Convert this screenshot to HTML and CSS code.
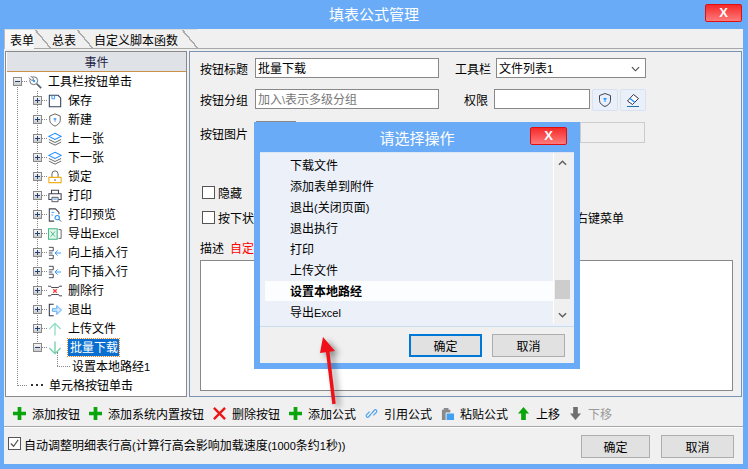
FILE: index.html
```html
<!DOCTYPE html>
<html lang="zh-CN">
<head>
<meta charset="UTF-8">
<title>填表公式管理</title>
<link rel="stylesheet" href="styles.css">
</head>
<body>
<div class="win">
  <div class="titlebar">
    <span class="title">填表公式管理</span>
    <span class="close-btn">X</span>
  </div>
  <div class="client">
    <div class="tabs">
      <span class="tab on">表单</span>
      <span class="tab">总表</span>
      <span class="tab">自定义脚本函数</span>
    </div>
    <div class="main">
      <div class="left">
        <div class="left-head">事件</div>
        <ul class="tree">
          <li>
            <div class="node"><i class="exp minus"></i><svg class="ico" viewBox="0 0 16 16"><circle cx="6.500" cy="6.500" r="4.500" fill="#fff" stroke="#55606e"/><path d="M3 1l3 3v2h-2l-3-3" fill="#fff" stroke="#55606e"/><circle cx="7" cy="7" r="1.300" fill="#1e90ff"/><path d="M10 10l5 5" stroke="#55606e" stroke-width="2"/></svg><span class="txt">工具栏按钮单击</span></div>
            <ul class="sub">
              <li><div class="node"><i class="exp"></i><svg class="ico" viewBox="0 0 16 16"><path d="M1.500 1.500h10l3 3v10h-13z" fill="none" stroke="#33405a" stroke-width="1.200"/><path d="M4.500 2v3.500h3V2" fill="none" stroke="#1e90ff"/></svg><span class="txt">保存</span></div></li>
              <li><div class="node"><i class="exp"></i><svg class="ico" viewBox="0 0 16 16"><path d="M8 1l6 2.500v5c0 3-3.500 5.500-6 6.500-2.500-1-6-3.500-6-6.500v-5z" fill="none" stroke="#555"/><path d="M6.500 6h3v1.500h-3z" fill="#1e90ff"/><path d="M8 7v3" stroke="#1e90ff"/></svg><span class="txt">新建</span></div></li>
              <li><div class="node"><i class="exp"></i><svg class="ico" viewBox="0 0 16 16"><path d="M8 1.500l7 3.500-7 3.500L1 5z" fill="none" stroke="#1e90ff" stroke-width="1.200"/><path d="M1 8.500l7 3.500 7-3.500M1 11.500L8 15l7-3.500" fill="none" stroke="#555"/></svg><span class="txt">上一张</span></div></li>
              <li><div class="node"><i class="exp"></i><svg class="ico" viewBox="0 0 16 16"><path d="M8 1.500l7 3.500-7 3.500L1 5z" fill="none" stroke="#1e90ff" stroke-width="1.200"/><path d="M1 8.500l7 3.500 7-3.500M1 11.500L8 15l7-3.500" fill="none" stroke="#555"/></svg><span class="txt">下一张</span></div></li>
              <li><div class="node"><i class="exp"></i><svg class="ico" viewBox="0 0 16 16"><path d="M4.500 8V4.500a3.500 3.500 0 0 1 7 0V8" fill="none" stroke="#555"/><path d="M1 8.500h14v6H1z" fill="none" stroke="#f0b020" stroke-width="1.300"/><path d="M7 11.500h2" stroke="#333"/></svg><span class="txt">锁定</span></div></li>
              <li><div class="node"><i class="exp"></i><svg class="ico" viewBox="0 0 16 16"><path d="M4 5V1.500h8V5M4 12H1V5.500h14V12h-3" fill="none" stroke="#445" stroke-width="1.200"/><path d="M4.500 9.500h7v5h-7z" fill="none" stroke="#445"/><path d="M6 11.500h4" stroke="#1e90ff"/></svg><span class="txt">打印</span></div></li>
              <li><div class="node"><i class="exp"></i><svg class="ico" viewBox="0 0 16 16"><path d="M7 15H1.500V1h7l4 4v2" fill="none" stroke="#445" stroke-width="1.200"/><path d="M4 5h3M4 8h2" stroke="#1e90ff"/><circle cx="10.500" cy="11" r="2.500" fill="none" stroke="#1e90ff" stroke-width="1.200"/><path d="M12.500 13l2.500 2.500" stroke="#445"/></svg><span class="txt">打印预览</span></div></li>
              <li><div class="node"><i class="exp"></i><svg class="ico" viewBox="0 0 16 16"><path d="M.500 2h10v12H.500z" fill="#e4f5ec" stroke="#3cb882" stroke-width="1.200"/><path d="M3 5l5 6M8 5l-5 6" stroke="#3cb882"/><path d="M12 3h3v10h-3" fill="none" stroke="#555"/></svg><span class="txt">导出<span class="latin">Excel</span></span></div></li>
              <li><div class="node"><i class="exp"></i><svg class="ico" viewBox="0 0 16 16"><path d="M1 1.500h5v4H1M1 8h4M1 10.500h5v4H1" fill="none" stroke="#334"/><path d="M15 8H8M11 5L8 8l3 3" fill="none" stroke="#1e90ff"/></svg><span class="txt">向上插入行</span></div></li>
              <li><div class="node"><i class="exp"></i><svg class="ico" viewBox="0 0 16 16"><path d="M1 1.500h5v4H1M1 8h4M1 10.500h5v4H1" fill="none" stroke="#334"/><path d="M15 8H8M11 5L8 8l3 3" fill="none" stroke="#1e90ff"/></svg><span class="txt">向下插入行</span></div></li>
              <li><div class="node"><i class="exp"></i><svg class="ico" viewBox="0 0 16 16"><path d="M0 2.500h3l1 1.500h8l1-1.500h3M0 13.500h3l1-1.500h8l1 1.500h3" fill="none" stroke="#334"/><path d="M6 6l4 4M10 6l-4 4" stroke="#f04040" stroke-width="1.500"/></svg><span class="txt">删除行</span></div></li>
              <li><div class="node"><i class="exp"></i><svg class="ico" viewBox="0 0 16 16"><path d="M6.500 1.500h-5v13h5" fill="none" stroke="#334" stroke-width="1.200"/><path d="M5 6.500h5V3l5.500 5-5.500 5V9.500H5z" fill="#cfe7ff" stroke="#49a2f5"/></svg><span class="txt">退出</span></div></li>
              <li><div class="node"><i class="exp"></i><svg class="ico" viewBox="0 0 16 16"><path d="M8 15.500V2M1.500 8L8 1.500 14.500 8" fill="none" stroke="#8fdcc0" stroke-width="1.500"/></svg><span class="txt">上传文件</span></div></li>
              <li>
                <div class="node"><i class="exp minus"></i><svg class="ico" viewBox="0 0 16 16"><path d="M8 .500V14M1.500 8L8 14.500 14.500 8" fill="none" stroke="#6fd0a8" stroke-width="1.500"/></svg><span class="txt sel">批量下载</span></div>
                <ul class="sub2">
                  <li><div class="node"><span class="txt">设置本地路经<span class="latin">1</span></span></div></li>
                </ul>
              </li>
            </ul>
          </li>
          <li><div class="node leaf"><b class="dots"></b><span class="txt">单元格按钮单击</span></div></li>
        </ul>
      </div>
      <div class="right">
        <div class="frow">
          <label class="lab">按钮标题</label>
          <div class="inp wide">批量下载</div>
          <label class="lab lab2">工具栏</label>
          <div class="inp sel-box">文件列表<span class="latin">1</span><svg class="chev" viewBox="0 0 10 6"><path d="M1 1l4 4 4-4" fill="none" stroke="#444" stroke-width="1.200"/></svg></div>
        </div>
        <div class="frow">
          <label class="lab">按钮分组</label>
          <div class="inp wide hint">加入<span class="latin">\</span>表示多级分组</div>
          <label class="lab lab3">权限</label>
          <div class="inp perm"></div>
          <span class="sq"><svg viewBox="0 0 16 16"><path d="M8 1.500l5.500 2v5c0 3-3 5-5.500 6-2.500-1-5.500-3-5.500-6v-5z" fill="none" stroke="#445"/><path d="M6.500 6h3v1.500h-3z" fill="#1e90ff"/><path d="M8 7v3" stroke="#1e90ff"/></svg></span>
          <span class="sq"><svg viewBox="0 0 16 16"><path d="M2.500 9l6-6.500 5 4-6 6z" fill="#fff" stroke="#334"/><path d="M5 6.500l5 4" stroke="#1e90ff" stroke-width="1.500"/><path d="M2 14.500h12" stroke="#1e6fb0"/></svg></span>
        </div>
        <div class="frow img-row">
          <label class="lab">按钮图片</label>
          <div class="img-box"></div>
          <div class="img-path"></div>
        </div>
        <div class="chk-row"><i class="chk"></i>隐藏</div>
        <div class="chk-row next"><i class="chk"></i>按下状态<span class="ctx">右键菜单</span></div>
        <div class="desc-row">描述<span class="red">自定义按钮</span></div>
        <div class="desc"></div>
      </div>
    </div>
    <div class="toolbar">
      <span class="tool"><svg viewBox="0 0 14 14"><path d="M5 0h4v5h5v4H9v5H5V9H0V5h5z" fill="#0aa50a"/></svg>添加按钮</span>
      <span class="tool"><svg viewBox="0 0 14 14"><path d="M5 0h4v5h5v4H9v5H5V9H0V5h5z" fill="#0aa50a"/></svg>添加系统内置按钮</span>
      <span class="tool"><svg viewBox="0 0 14 14"><path d="M1 1l12 12M13 1L1 13" stroke="#e81818" stroke-width="2.600"/></svg>删除按钮</span>
      <span class="tool"><svg viewBox="0 0 14 14"><path d="M5 0h4v5h5v4H9v5H5V9H0V5h5z" fill="#0aa50a"/></svg>添加公式</span>
      <span class="tool"><svg viewBox="0 0 14 14"><path d="M6 8.500L3.500 11a1.700 1.700 0 0 1-2-2.500L5 5M8 5.500L10.500 3a1.700 1.700 0 0 1 2 2.500L9 9M4.500 9.500l5-5" fill="none" stroke="#4fa3ee" stroke-width="1.300"/></svg>引用公式</span>
      <span class="tool"><svg viewBox="0 0 14 14"><path d="M1 14V3h2V1h5v2h2v3H5v8z" fill="#8a8a8a"/><path d="M6 7h8v7H6z" fill="#42a0f0"/></svg>粘贴公式</span>
      <span class="tool"><svg viewBox="0 0 14 14"><path d="M7 0l6 7H9.500v7h-5V7H1z" fill="#0aa50a"/></svg>上移</span>
      <span class="tool off"><svg viewBox="0 0 14 14"><path d="M7 14l6-7H9.500V0h-5v7H1z" fill="#6e6e6e"/></svg>下移</span>
    </div>
    <div class="footer">
      <i class="chk checked"><svg viewBox="0 0 12 12"><path d="M2 6l3 3 5-7" fill="none" stroke="#555" stroke-width="1.300"/></svg></i>
      <span class="foot-txt">自动调整明细表行高<span class="latin">(</span>计算行高会影响加载速度<span class="latin">(1000</span>条约<span class="latin">1</span>秒<span class="latin">))</span></span>
      <span class="btn">确定</span>
      <span class="btn">取消</span>
    </div>
  </div>
</div>

<div class="dlg">
  <div class="dlg-title"><span class="title">请选择操作</span><span class="close-btn">X</span></div>
  <div class="dlg-body">
    <div class="dlg-list">
      <ul class="ops">
        <li>下载文件</li>
        <li>添加表单到附件</li>
        <li>退出<span class="latin">(</span>关闭页面<span class="latin">)</span></li>
        <li>退出执行</li>
        <li>打印</li>
        <li>上传文件</li>
        <li class="cur">设置本地路经</li>
        <li>导出<span class="latin">Excel</span></li>
      </ul>
      <div class="scroll">
        <svg viewBox="0 0 10 6"><path d="M1 5l4-4 4 4" fill="none" stroke="#606060" stroke-width="1.600"/></svg>
        <span class="thumb"></span>
        <svg viewBox="0 0 10 6"><path d="M1 1l4 4 4-4" fill="none" stroke="#606060" stroke-width="1.600"/></svg>
      </div>
    </div>
    <div class="dlg-foot">
      <span class="btn main-btn">确定</span>
      <span class="btn">取消</span>
    </div>
  </div>
</div>

<svg class="arrow" viewBox="0 0 30 80"><path d="M11.500 20L18 74" stroke="#f01018" stroke-width="3.500"/><path d="M7 7L19 21 4 23z" fill="#f01018"/></svg>
</body>
</html>
```
FILE: styles.css
```css
*{ padding:0; margin:0; box-sizing:border-box; }
ul{ list-style:none; }
i{ font-style:normal; display:block; }
html,body{ width:748px; height:469px; overflow:hidden; }
body{
  position:relative;
  font-family:"Noto Sans CJK SC","Liberation Sans",sans-serif;
  font-size:12px;
  color:#000;
  background:#6aabf7;
}
.latin{ font-family:"Liberation Sans",sans-serif; font-size:11px; }

.win{ display:flex; flex-direction:column; height:464px; }
.titlebar{ height:29px; display:flex; justify-content:center; align-items:center; position:relative; flex:none; padding-bottom:2px; }
.title{ color:#fff; font-size:15px; }
.close-btn{
  position:absolute;
  right:6px;
  top:4px;
  width:37px;
  height:18px;
  background:linear-gradient(#f52a2a,#ff7a7a);
  border:1px solid #e01010;
  border-radius:2px;
  color:#fff;
  font:bold 13px/16px "Liberation Sans",sans-serif;
  text-align:center;
}
.client{ margin:0 5px 0 4px; flex:1; background:#f0f0f0; display:flex; flex-direction:column; min-height:0; }

.tabs{ height:20px; display:flex; border-bottom:1px solid #a8a8a8; flex:none; }
.tab{
  position:relative;
  height:20px;
  line-height:20px;
  padding:0 16px 0 5px;
  margin-right:-3px;
  border-top:1px solid #ddd;
}
.tab:last-child{ padding-right:19px; }
.tab::after{
  content:"";
  position:absolute;
  right:-1px;
  top:0;
  width:16px;
  height:19px;
  background:linear-gradient(to top right,transparent 48%,#aaa 48%,#aaa 54%,transparent 54%);
}
.tab.on{ background:linear-gradient(#f8f8f8,#f8f8f8) 0 0/calc(100% - 16px) 100% no-repeat; border-left:1px solid #bbb; }

.main{ height:348px; display:flex; flex:none; padding:2px 1px 0 1px; gap:2px; }
.left{ width:182px; flex:none; border:1px solid #8a8a8a; background:#fff; padding-left:1px; overflow:hidden; }
.left-head{ height:20px; line-height:19px; background:#dfe3e8; border-bottom:1px solid #c8924a; text-align:center; color:#224; }

.tree{ position:relative; padding-left:6px; }
.tree::before{ content:""; position:absolute; left:10px; top:10px; bottom:9px; border-left:1px dotted #888; }
.sub{ position:relative; padding-left:20px; }
.sub::before{ content:""; position:absolute; left:24px; top:0; bottom:28px; border-left:1px dotted #888; }
.sub2{ position:relative; padding-left:24px; }
.sub2::before{ content:""; position:absolute; left:24px; top:-5px; height:14px; border-left:1px dotted #888; }
.node{
  height:19px;
  display:flex;
  align-items:center;
  position:relative;
  background:repeating-linear-gradient(90deg,#888 0 1px,transparent 1px 2px) 9px 9px/6px 1px no-repeat;
}
.exp{
  width:9px;
  height:9px;
  border:1px solid #8a8a8a;
  background:linear-gradient(#f6f6f6,#ccc);
  position:relative;
  flex:none;
  z-index:1;
  margin-right:6px;
}
.exp::before{ content:""; position:absolute; left:1px; top:3px; width:5px; height:1px; background:#24407a; }
.exp::after{ content:""; position:absolute; left:3px; top:1px; width:1px; height:5px; background:#24407a; }
.exp.minus::after{ display:none; }
.ico{ width:14px; height:14px; flex:none; margin-right:5px; }
.txt{ white-space:nowrap; padding:0 1px 2px; }
.sel{ background:#0a6fd0; color:#fff; outline:1px dotted #f08020; line-height:15px; margin-left:1px; padding:0 1px 2px 2px; }
.sub2 .node{ background:none; }
.sub2 .node::before{ content:""; width:13px; border-top:1px dotted #888; margin-right:1px; }
.leaf{ background:none; }
.leaf .dots{ width:10px; height:1px; margin:0 20px 0 5px; background:repeating-linear-gradient(90deg,#888 0 1px,transparent 1px 2px); position:relative; }
.leaf .dots::after{ content:""; position:absolute; left:13px; top:-1px; width:12px; height:2px; background:repeating-linear-gradient(90deg,#333 0 2px,transparent 2px 5px); }

.right{ flex:1; min-width:0; border:1px solid #7a93b5; padding:6px 9px 0 10px; display:flex; flex-direction:column; }
.frow{ display:flex; align-items:center; height:20px; margin-bottom:11px; }
.lab{ width:55px; flex:none; }
.lab2{ width:41px; margin-left:16px; }
.lab3{ width:30px; margin-left:25px; }
.inp{ height:20px; border:1px solid #888; background:#fff; line-height:18px; padding-left:2px; position:relative; flex:none; }
.wide{ width:184px; }
.hint{ color:#777; }
.sel-box{ width:150px; }
.chev{ position:absolute; right:5px; top:7px; width:9px; height:6px; }
.perm{ width:96px; margin-right:2px; }
.sq{ width:26px; height:22px; flex:none; align-self:flex-start; border:1px solid #d8e2f2; border-radius:2px; background:#eaf0fa; margin-right:2px; display:flex; align-items:center; justify-content:center; }
.sq svg{ width:16px; height:16px; }
.img-row{ align-items:flex-start; height:66px; margin-bottom:0; line-height:28px; }
.img-box{ width:40px; height:40px; border-top:1px solid #888; margin:1px 284px 0 1px; flex:none; }
.img-path{ width:65px; height:21px; border:1px solid #ccc; margin-top:2px; flex:none; }
.chk{ width:13px; height:13px; border:1px solid #555; background:#fff; margin:0 3px 0 2px; flex:none; }
.chk-row{ display:flex; align-items:center; height:13px; }
.next{ margin-top:12px; }
.ctx{ margin-left:310px; }
.desc-row{ margin-top:15px; height:18px; line-height:18px; }
.red{ color:#f00; margin-left:6px; }
.desc{ height:131px; width:533px; margin-top:3px; background:#fff; border:1px solid #888; }

.toolbar{ height:30px; display:flex; align-items:center; gap:9px; padding:3px 0 0 9px; flex:none; border-bottom:1px solid #a8a8a8; }
.tool{ display:flex; align-items:center; white-space:nowrap; }
.tool svg{ width:13px; height:13px; margin-right:6px; }
.off{ color:#999; }
.footer{ flex:1; display:flex; align-items:center; padding:0 9px 0 4px; border-top:1px solid #fff; }
.chk.checked{ margin:-5px 3px 0 0; display:flex; }
.chk.checked svg{ width:11px; height:11px; }
.foot-txt{ flex:1; padding-bottom:4px; }
.btn{
  width:69px;
  height:23px;
  line-height:21px;
  border:1px solid #adadad;
  background:#e1e1e1;
  text-align:center;
  margin-left:11px;
  display:block;
}
.footer .btn:last-child{ width:73px; }

.dlg{
  position:absolute;
  left:254px;
  top:122px;
  width:326px;
  height:247px;
  background:#6aabf7;
  padding:0 6px 6px;
  display:flex;
  flex-direction:column;
}
.dlg-title{ height:30px; display:flex; justify-content:center; align-items:center; position:relative; flex:none; }
.dlg .close-btn{ right:7px; top:5px; }
.dlg-body{ flex:1; background:#f0f0f0; display:flex; flex-direction:column; }
.dlg-list{ height:175px; flex:none; display:flex; background:#ebf0f9; border-bottom:1px solid #c8dcf0; border-top:1px solid #d8e6f6; padding:0 4px 3px 1px; }
.ops{ flex:1; padding-top:2px; }
.ops li{ height:21px; line-height:20px; padding-left:29px; }
.ops .cur{ background:#fcfdfe; font-weight:bold; margin-left:4px; padding-left:25px; height:20px; margin-bottom:1px; }
.scroll{ width:17px; flex:none; background:#f0f0f0; border-left:1px solid #fff; display:flex; flex-direction:column; align-items:center; padding-top:7px; }
.scroll svg{ width:9px; height:6px; display:block; flex:none; }
.thumb{ width:15px; height:19px; flex:none; background:#cdcdcd; margin-top:114px; margin-bottom:13px; }
.dlg-foot{ flex:1; display:flex; justify-content:flex-end; align-items:flex-start; padding:7px 9px 0 0; }
.dlg-foot .btn{ width:73px; margin-left:10px; }
.main-btn{ border:2px solid #0078d7; line-height:19px; }

.arrow{ position:absolute; left:316px; top:330px; width:30px; height:80px; filter:drop-shadow(4px 3px 3px rgba(0,0,0,.45)); }
```
